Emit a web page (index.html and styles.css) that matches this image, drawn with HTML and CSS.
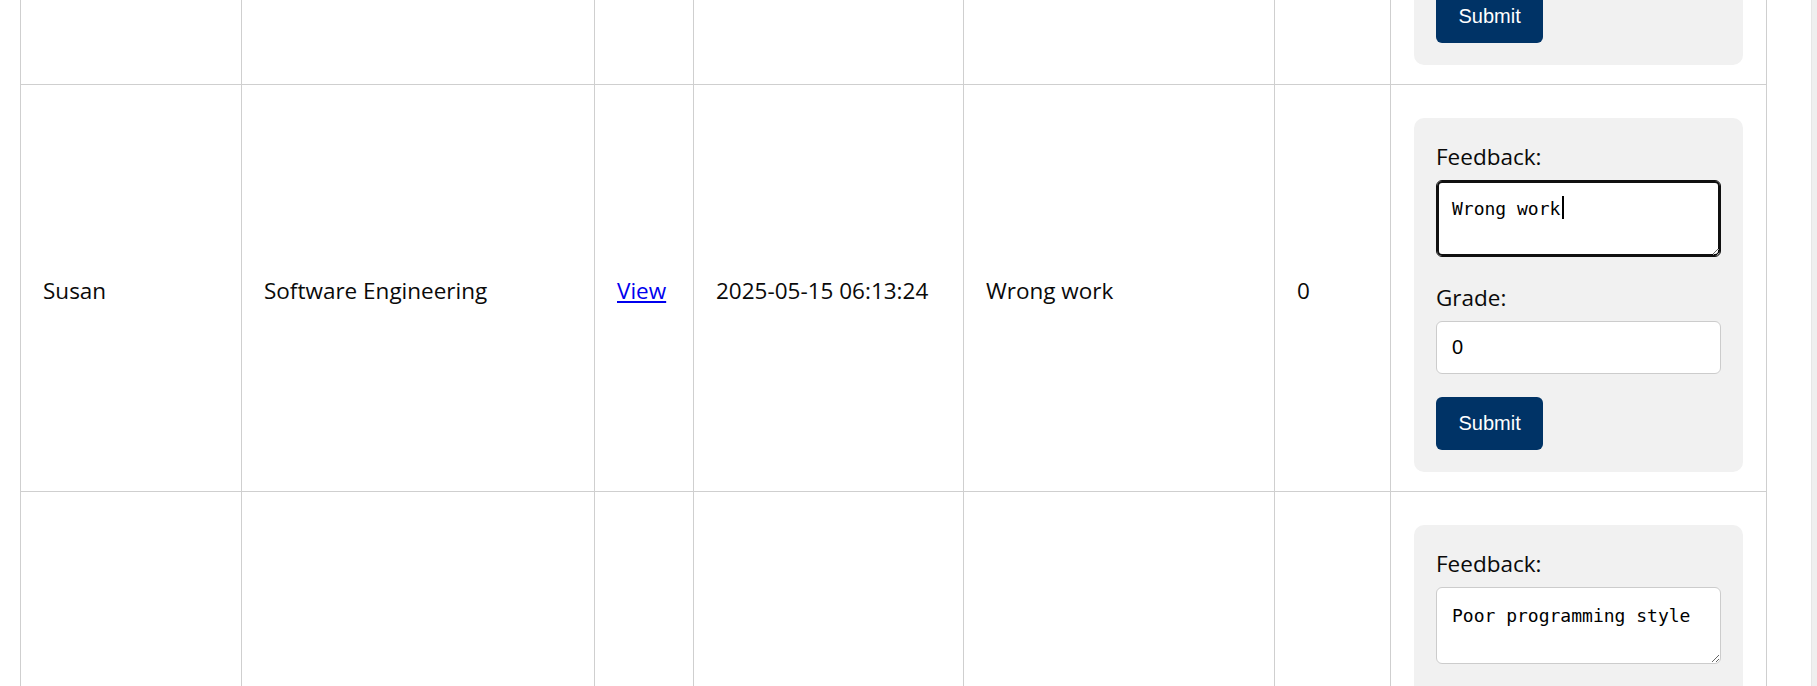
FILE: index.html
```html
<!DOCTYPE html>
<html lang="en">
<head>
<meta charset="utf-8">
<title>Submissions</title>
<link rel="stylesheet" href="styles.css">
</head>
<body>
<div class="page">
  <main class="main">
    <table class="subs">
      <colgroup>
        <col class="c-name"><col class="c-course"><col class="c-file"><col class="c-date"><col class="c-fb"><col class="c-grade"><col class="c-act">
      </colgroup>
      <tbody>
        <tr>
          <td></td>
          <td></td>
          <td></td>
          <td></td>
          <td></td>
          <td></td>
          <td class="act">
            <form class="panel">
              <label class="lbl">Feedback:</label>
              <textarea class="fb"></textarea>
              <label class="lbl">Grade:</label>
              <input class="grade" type="text" value="">
              <button class="btn" type="button">Submit</button>
            </form>
          </td>
        </tr>
        <tr>
          <td>Susan</td>
          <td>Software Engineering</td>
          <td><a href="#">View</a></td>
          <td>2025-05-15 06:13:24</td>
          <td>Wrong work</td>
          <td>0</td>
          <td class="act">
            <form class="panel">
              <label class="lbl">Feedback:</label>
              <div class="fb-wrap">
                <textarea class="fb focused">Wrong work</textarea>
                <span class="caret"></span>
              </div>
              <label class="lbl">Grade:</label>
              <input class="grade" type="text" value="0">
              <button class="btn" type="button">Submit</button>
            </form>
          </td>
        </tr>
        <tr>
          <td></td>
          <td></td>
          <td></td>
          <td></td>
          <td></td>
          <td></td>
          <td class="act">
            <form class="panel">
              <label class="lbl">Feedback:</label>
              <textarea class="fb">Poor programming style</textarea>
              <label class="lbl">Grade:</label>
              <input class="grade" type="text" value="">
              <button class="btn" type="button">Submit</button>
            </form>
          </td>
        </tr>
      </tbody>
    </table>
  </main>
  <div class="scroll-strip"></div>
</div>
</body>
</html>
```

FILE: styles.css
```css
html, body {
  margin: 0;
  padding: 0;
  overflow: hidden;
  background: #ffffff;
}

body {
  font-family: "Open Sans", "Noto Sans", sans-serif;
  font-size: 22.5px;
  color: #0a0a0a;
}

.page {
  display: flex;
  height: 686px;
  overflow: hidden;
}

.main {
  flex: 1;
  padding-left: 20px;
}

.scroll-strip {
  width: 5px;
  background: #efefef;
  border-left: 1px solid #e6e6e6;
}

.subs {
  margin-top: -323px;
  width: 1747px;
  table-layout: fixed;
  border-collapse: collapse;
}

.c-name { width: 221px; }
.c-course { width: 353px; }
.c-file { width: 99px; }
.c-date { width: 270px; }
.c-fb { width: 311px; }
.c-grade { width: 116px; }
.c-act { width: 376px; }

.subs td {
  border: 1px solid #cfcfcf;
  padding: 25px 22px 19px 22px;
  vertical-align: middle;
  line-height: 26px;
  white-space: nowrap;
}

.subs a {
  color: #0000ee;
  text-decoration: underline;
}

.subs td.act {
  padding: 33px 23px 19px 23px;
}

.panel {
  display: flex;
  flex-direction: column;
  align-items: flex-start;
  background: #f1f1f1;
  border-radius: 10px;
  padding: 26px 22px 22px 22px;
  margin: 0;
}

.lbl {
  display: block;
  line-height: 26px;
  margin-bottom: 10px;
}

.fb-wrap {
  position: relative;
  width: 100%;
  margin-bottom: 28px;
}

.fb {
  display: block;
  box-sizing: border-box;
  width: 285px;
  height: 77px;
  margin: 0 0 28px 0;
  padding: 17px 15px 0 15px;
  border: 1px solid #cccccc;
  border-radius: 6px;
  background: #ffffff;
  font-family: "DejaVu Sans Mono", "Liberation Mono", monospace;
  font-size: 18px;
  line-height: 22px;
  color: #000000;
  outline: none;
}

.fb-wrap .fb {
  margin-bottom: 0;
}

.fb.focused {
  border-color: #101010;
  box-shadow: inset 0 0 0 2px #101010;
}

.caret {
  position: absolute;
  left: 126px;
  top: 16px;
  width: 2px;
  height: 23px;
  background: #000000;
}

.grade {
  display: block;
  box-sizing: border-box;
  width: 285px;
  height: 53px;
  margin: 0 0 23px 0;
  padding: 0 15px;
  border: 1px solid #cccccc;
  border-radius: 6px;
  background: #ffffff;
  font-family: "Liberation Sans", Arial, sans-serif;
  font-size: 20px;
  color: #000000;
  outline: none;
}

.btn {
  box-sizing: border-box;
  height: 53px;
  padding: 0 22.5px;
  border: none;
  border-radius: 6px;
  background: #003366;
  color: #ffffff;
  font-family: "Liberation Sans", Arial, sans-serif;
  font-size: 20px;
  line-height: 23px;
  cursor: pointer;
}
```
